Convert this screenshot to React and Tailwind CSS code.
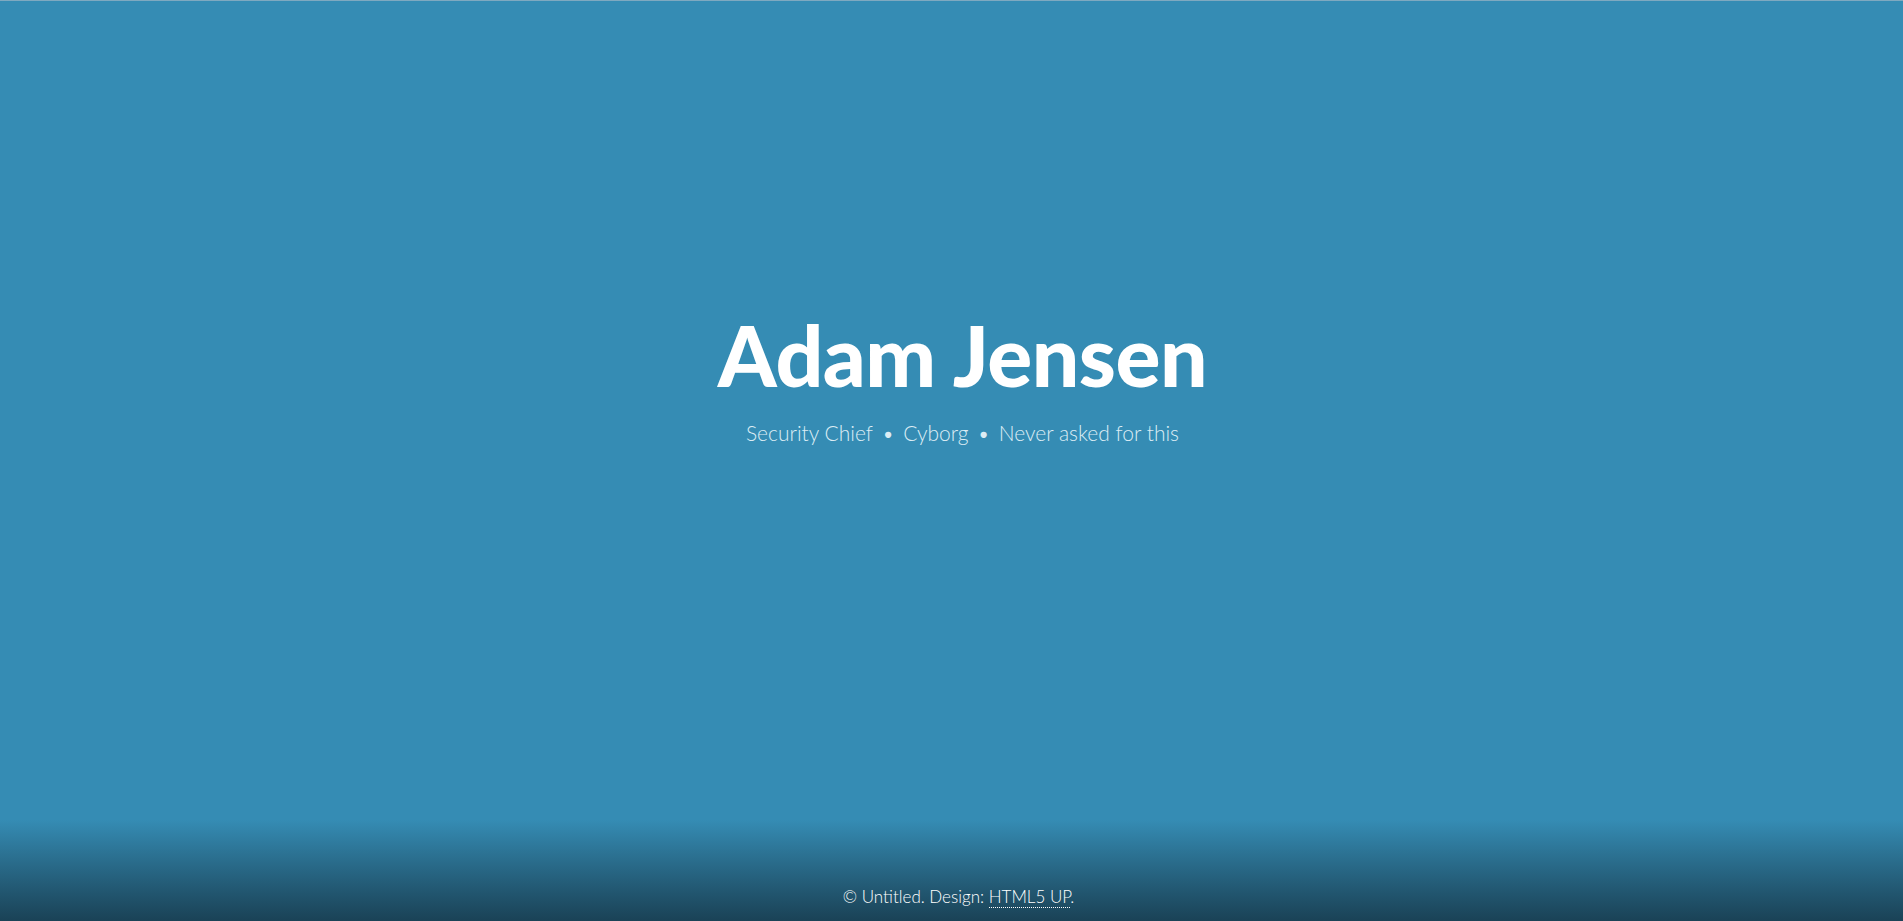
import React from "react";

const App = () => {
  return (
    <div
      className="flex h-screen w-full flex-col overflow-hidden border-t border-[#7fa9c0] bg-[#358cb4] text-white"
      style={{ fontFamily: "Lato, 'Noto Sans', sans-serif" }}
    >
      <header className="flex flex-1 flex-col items-center justify-start pl-[22px] pt-[312px]">
        <h1 className="text-[84px] font-black leading-none tracking-[-0.5px] text-white">
          Adam Jensen
        </h1>
        <p className="mt-[20px] text-[21px] font-light text-[#dcecf4]">
          Security Chief
          <span className="mx-[9px]">•</span>
          Cyborg
          <span className="mx-[9px]">•</span>
          Never asked for this
        </p>
      </header>
      <footer className="flex h-[101px] items-end justify-center bg-gradient-to-b from-[#358cb4] to-[#1a4256] pb-[12px] pl-[14px]">
        <p className="text-[17px] font-light text-white">
          © Untitled. Design:{" "}
          <a href="#" className="border-b border-dotted border-white">
            HTML5 UP
          </a>
          .
        </p>
      </footer>
    </div>
  );
};

export default App;
